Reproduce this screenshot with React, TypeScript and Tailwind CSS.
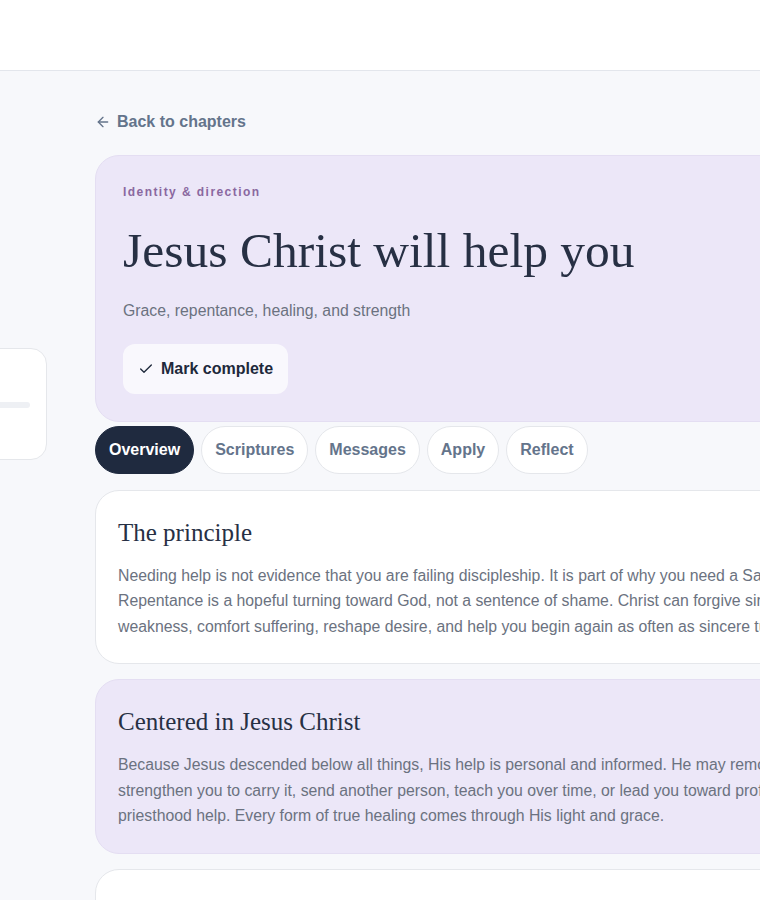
import React from 'react';
import { ArrowLeft, Check } from 'lucide-react';

const tabs = ['Overview', 'Scriptures', 'Messages', 'Apply', 'Reflect'];

const sections = [
  {
    title: 'The principle',
    body: 'Needing help is not evidence that you are failing discipleship. It is part of why you need a Savior. Repentance is a hopeful turning toward God, not a sentence of shame. Christ can forgive sin, strengthen weakness, comfort suffering, reshape desire, and help you begin again as often as sincere turning allows.',
    tint: false,
  },
  {
    title: 'Centered in Jesus Christ',
    body: 'Because Jesus descended below all things, His help is personal and informed. He may remove a burden, strengthen you to carry it, send another person, teach you over time, or lead you toward professional or priesthood help. Every form of true healing comes through His light and grace.',
    tint: true,
  },
];

const App: React.FC = () => {
  const active = 'Overview';

  return (
    <div className="min-h-screen bg-[#f7f8fb] font-['Liberation_Sans',Arial,sans-serif] overflow-x-hidden">
      <header className="h-[71px] bg-white border-b border-[#e3e6ec]" />

      <div className="flex justify-center">
        <div className="flex gap-12 w-[1020px] shrink-0 pt-[39px] pb-10">
          {/* sidebar */}
          <aside className="w-[177px] shrink-0 pt-[238px]">
            <div className="h-[112px] rounded-2xl border border-[#e5e7eb] bg-white p-4">
              <p className="text-xs font-bold text-slate-400 uppercase tracking-widest">Progress</p>
              <div className="mt-[21px] h-1.5 rounded-full bg-[#eef0f4]">
                <div className="h-1.5 w-1/4 rounded-full bg-[#8b6aa3]" />
              </div>
              <p className="mt-3 text-xs text-slate-400">3 of 12</p>
            </div>
          </aside>

          {/* main */}
          <main className="w-[795px] shrink-0">
            <a href="#" className="flex items-center gap-[6px] text-base leading-6 font-bold text-[#64748b]">
              <ArrowLeft className="w-4 h-4" strokeWidth={2} />
              Back to chapters
            </a>

            <section className="mt-[21px] rounded-3xl border border-[#e4def2] bg-[#ece7f8] pt-7 px-[27px] pb-[27px]">
              <p className="text-xs leading-4 font-bold tracking-[0.12em] text-[#8a68a0]">Identity &amp; direction</p>
              <h1 className="mt-[23px] font-['Liberation_Serif','Times_New_Roman',serif] text-[49.5px] leading-[1.15] text-[#273044]">
                Jesus Christ will help you
              </h1>
              <p className="mt-[19px] text-[15.8px] leading-6 text-[#6b7280]">Grace, repentance, healing, and strength</p>
              <button className="mt-[21px] flex items-center gap-[7px] rounded-xl bg-white/70 px-[15px] py-[13px] text-base leading-6 font-bold text-[#1e293b]">
                <Check className="w-4 h-4" strokeWidth={2} />
                Mark complete
              </button>
            </section>

            <nav className="mt-1 flex gap-[7px]">
              {tabs.map((t) => (
                <button
                  key={t}
                  className={`rounded-full border px-[13px] py-[11px] text-base leading-6 font-bold ${
                    t === active
                      ? 'bg-[#1f2a3f] border-[#1f2a3f] text-white'
                      : 'bg-white border-[#e5e7eb] text-[#64748b]'
                  }`}
                >
                  {t}
                </button>
              ))}
            </nav>

            <div className="mt-4 flex flex-col gap-[15px]">
              {sections.map((s) => (
                <div
                  key={s.title}
                  className={`rounded-3xl border px-[22px] py-6 ${
                    s.tint ? 'bg-[#ece7f8] border-[#e4def2]' : 'bg-white border-[#e5e7eb]'
                  }`}
                >
                  <h2 className="font-['Liberation_Serif','Times_New_Roman',serif] text-[25px] leading-[36px] text-[#273044]">
                    {s.title}
                  </h2>
                  <p className="mt-3 text-[15.8px] leading-[25.5px] text-[#6b7280]">{s.body}</p>
                </div>
              ))}
              <div className="rounded-3xl border border-[#e5e7eb] bg-white px-[22px] py-6">
                <h2 className="font-['Liberation_Serif','Times_New_Roman',serif] text-[25px] leading-[36px] text-[#273044]/5">
                  Small and simple steps
                </h2>
                <p className="mt-3 text-[15.8px] leading-[25.5px] text-[#6b7280]/5">
                  Choose one honest prayer, one scripture, and one conversation this week.
                </p>
              </div>
            </div>
          </main>
        </div>
      </div>
    </div>
  );
};

export default App;
